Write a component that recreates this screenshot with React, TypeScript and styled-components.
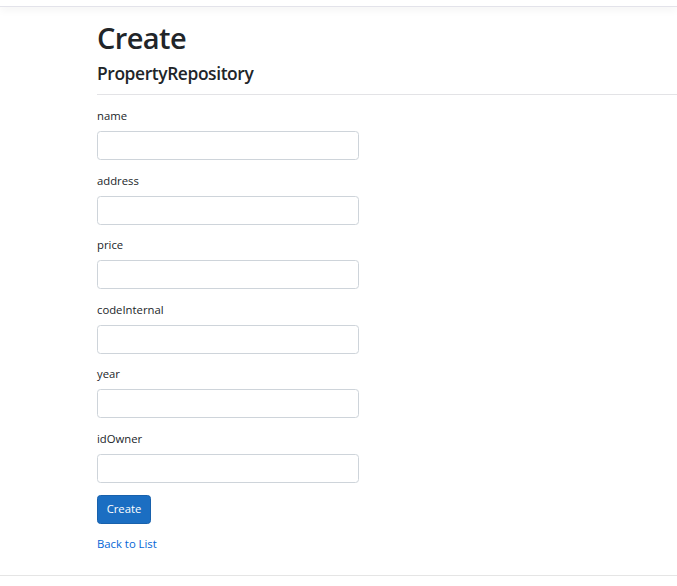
import React from "react";
import styled, { createGlobalStyle } from "styled-components";

const Global = createGlobalStyle`
  html, body { margin: 0; padding: 0; background: #fff; }
  body {
    font-family: "Segoe UI", "Open Sans", "Noto Sans", sans-serif;
    font-size: 11.3px;
    line-height: 1.5;
    color: #212529;
  }
  * { box-sizing: border-box; }
`;

const Page = styled.div`
  width: 677px;
  min-height: 586px;
  display: flex;
  flex-direction: column;
`;

const NavBar = styled.header`
  height: 7px;
  border-bottom: 1px solid #e3e3ea;
  box-shadow: 0 3px 9px rgba(0, 0, 0, 0.05);
  background: #fff;
`;

const Main = styled.main`
  padding: 13px 0 0 97px;
  flex: 1;
`;

const Title = styled.h1`
  margin: 0 0 6px;
  font-size: 29px;
  font-weight: 600;
  line-height: 36px;
  letter-spacing: -0.6px;
`;

const Subtitle = styled.h4`
  margin: 0;
  font-size: 17.4px;
  font-weight: 600;
  line-height: 22px;
  letter-spacing: -0.4px;
`;

const Rule = styled.hr`
  margin: 10px 0 12px;
  border: 0;
  border-top: 1px solid #e3e3e6;
`;

const Form = styled.form`
  width: 262px;
  display: flex;
  flex-direction: column;
`;

const Group = styled.div`
  display: flex;
  flex-direction: column;
  margin-bottom: 11.6px;
`;

const Label = styled.label`
  display: block;
  font-size: 11.3px;
  line-height: 18px;
  margin-bottom: 6px;
  color: #212529;
`;

const Input = styled.input`
  display: block;
  width: 100%;
  height: 29px;
  padding: 4px 10px;
  font-family: inherit;
  font-size: 12px;
  color: #495057;
  background: #fff;
  border: 1px solid #ced4da;
  border-radius: 3.5px;
  outline: none;
`;

const Button = styled.button`
  align-self: flex-start;
  height: 29px;
  width: 54px;
  padding: 0;
  font-family: inherit;
  font-size: 11.3px;
  line-height: 1.5;
  color: #fff;
  background: #1b6ec2;
  border: 1px solid #1861ac;
  border-radius: 3.5px;
  cursor: pointer;
`;

const LinkRow = styled.div`
  line-height: 18px;
`;

const Link = styled.a`
  color: #0366d6;
  text-decoration: none;
  font-size: 11.3px;
`;

const Footer = styled.footer`
  height: 11px;
  border-top: 1px solid #e5e5e5;
`;

const fields = ["name", "address", "price", "codeInternal", "year", "idOwner"];

export default function App() {
  return (
    <Page>
      <Global />
      <NavBar />
      <Main>
        <Title>Create</Title>
        <Subtitle>PropertyRepository</Subtitle>
        <Rule />
        <Form onSubmit={(e) => e.preventDefault()}>
          {fields.map((f) => (
            <Group key={f}>
              <Label htmlFor={f}>{f}</Label>
              <Input id={f} name={f} type="text" />
            </Group>
          ))}
          <Group>
            <Button type="submit">Create</Button>
          </Group>
        </Form>
        <LinkRow>
          <Link href="#">Back to List</Link>
        </LinkRow>
      </Main>
      <Footer />
    </Page>
  );
}
